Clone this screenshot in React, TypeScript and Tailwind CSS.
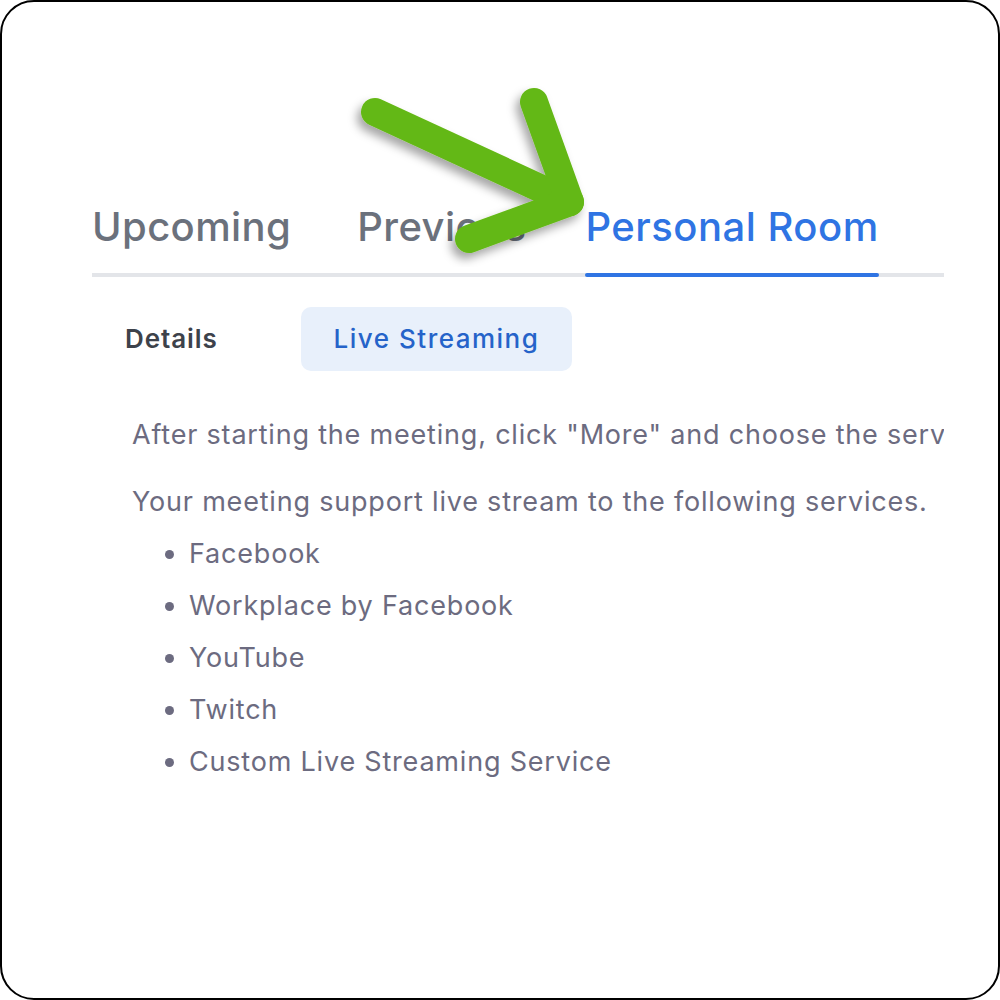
export default function App() {
  const services = [
    "Facebook",
    "Workplace by Facebook",
    "YouTube",
    "Twitch",
    "Custom Live Streaming Service",
  ];

  return (
    <div
      className="relative h-[1000px] w-[1000px] overflow-hidden rounded-[34px] border-2 border-black bg-white"
      style={{ fontFamily: "Inter, 'Noto Sans', sans-serif" }}
    >
      <div className="ml-[90px] mr-[54px] overflow-hidden pt-[201px]">
        {/* main tabs */}
        <div className="flex items-end border-b-4 border-[#e3e5e9]">
          <div className="mr-[66px] pb-[22px] text-[40px] font-medium leading-[48px] tracking-[0.4px] text-[#6b717c]">Upcoming</div>
          <div className="mr-[59px] pb-[22px] text-[40px] font-medium leading-[48px] tracking-[0.4px] text-[#6b717c]">Previous</div>
          <div className="relative pb-[22px] text-[40px] font-medium leading-[48px] tracking-[0.5px] text-[#2f74e3]">
            Personal Room
            <div className="absolute -bottom-[4px] left-0 right-0 h-[4px] rounded-full bg-[#2f74e3]" />
          </div>
        </div>

        {/* sub tabs */}
        <div className="mt-[30px] flex items-center gap-[50px]">
          <div className="px-[33px] py-[16px] text-[26px] font-semibold leading-[32px] tracking-[0.9px] text-[#3d424b]">Details</div>
          <div className="rounded-[10px] bg-[#e8f0fb] px-[33px] py-[16px] text-[26px] font-medium leading-[32px] tracking-[1.5px] text-[#2563c9]">
            Live Streaming
          </div>
        </div>

        {/* body */}
        <div className="mt-[46px] whitespace-nowrap pl-[40px] text-[27px] leading-[36px] tracking-[0.8px] text-[#6c6b80]">
          <p>After starting the meeting, click "More" and choose the service you want to stream to.</p>
          <p className="mt-[31px]">Your meeting support live stream to the following services.</p>
          <ul className="mt-[16px] flex flex-col gap-[16px] pl-[57px]">
            {services.map((s) => (
              <li key={s} className="list-disc">
                {s}
              </li>
            ))}
          </ul>
        </div>
      </div>

      {/* green arrow annotation */}
      <svg
        className="pointer-events-none absolute left-0 top-0"
        width="1000"
        height="1000"
        viewBox="0 0 1000 1000"
        fill="none"
      >
        <defs>
          <filter id="shadow" x="-20%" y="-20%" width="140%" height="140%">
            <feDropShadow dx="-4" dy="6" stdDeviation="5" floodColor="#000" floodOpacity="0.35" />
          </filter>
        </defs>
        <g
          filter="url(#shadow)"
          stroke="#64b814"
          strokeWidth="28"
          strokeLinecap="round"
          strokeLinejoin="round"
        >
          <path d="M373 110 L568 200" />
          <path d="M532 100 L568 200 L467 237" />
        </g>
      </svg>
    </div>
  );
}
